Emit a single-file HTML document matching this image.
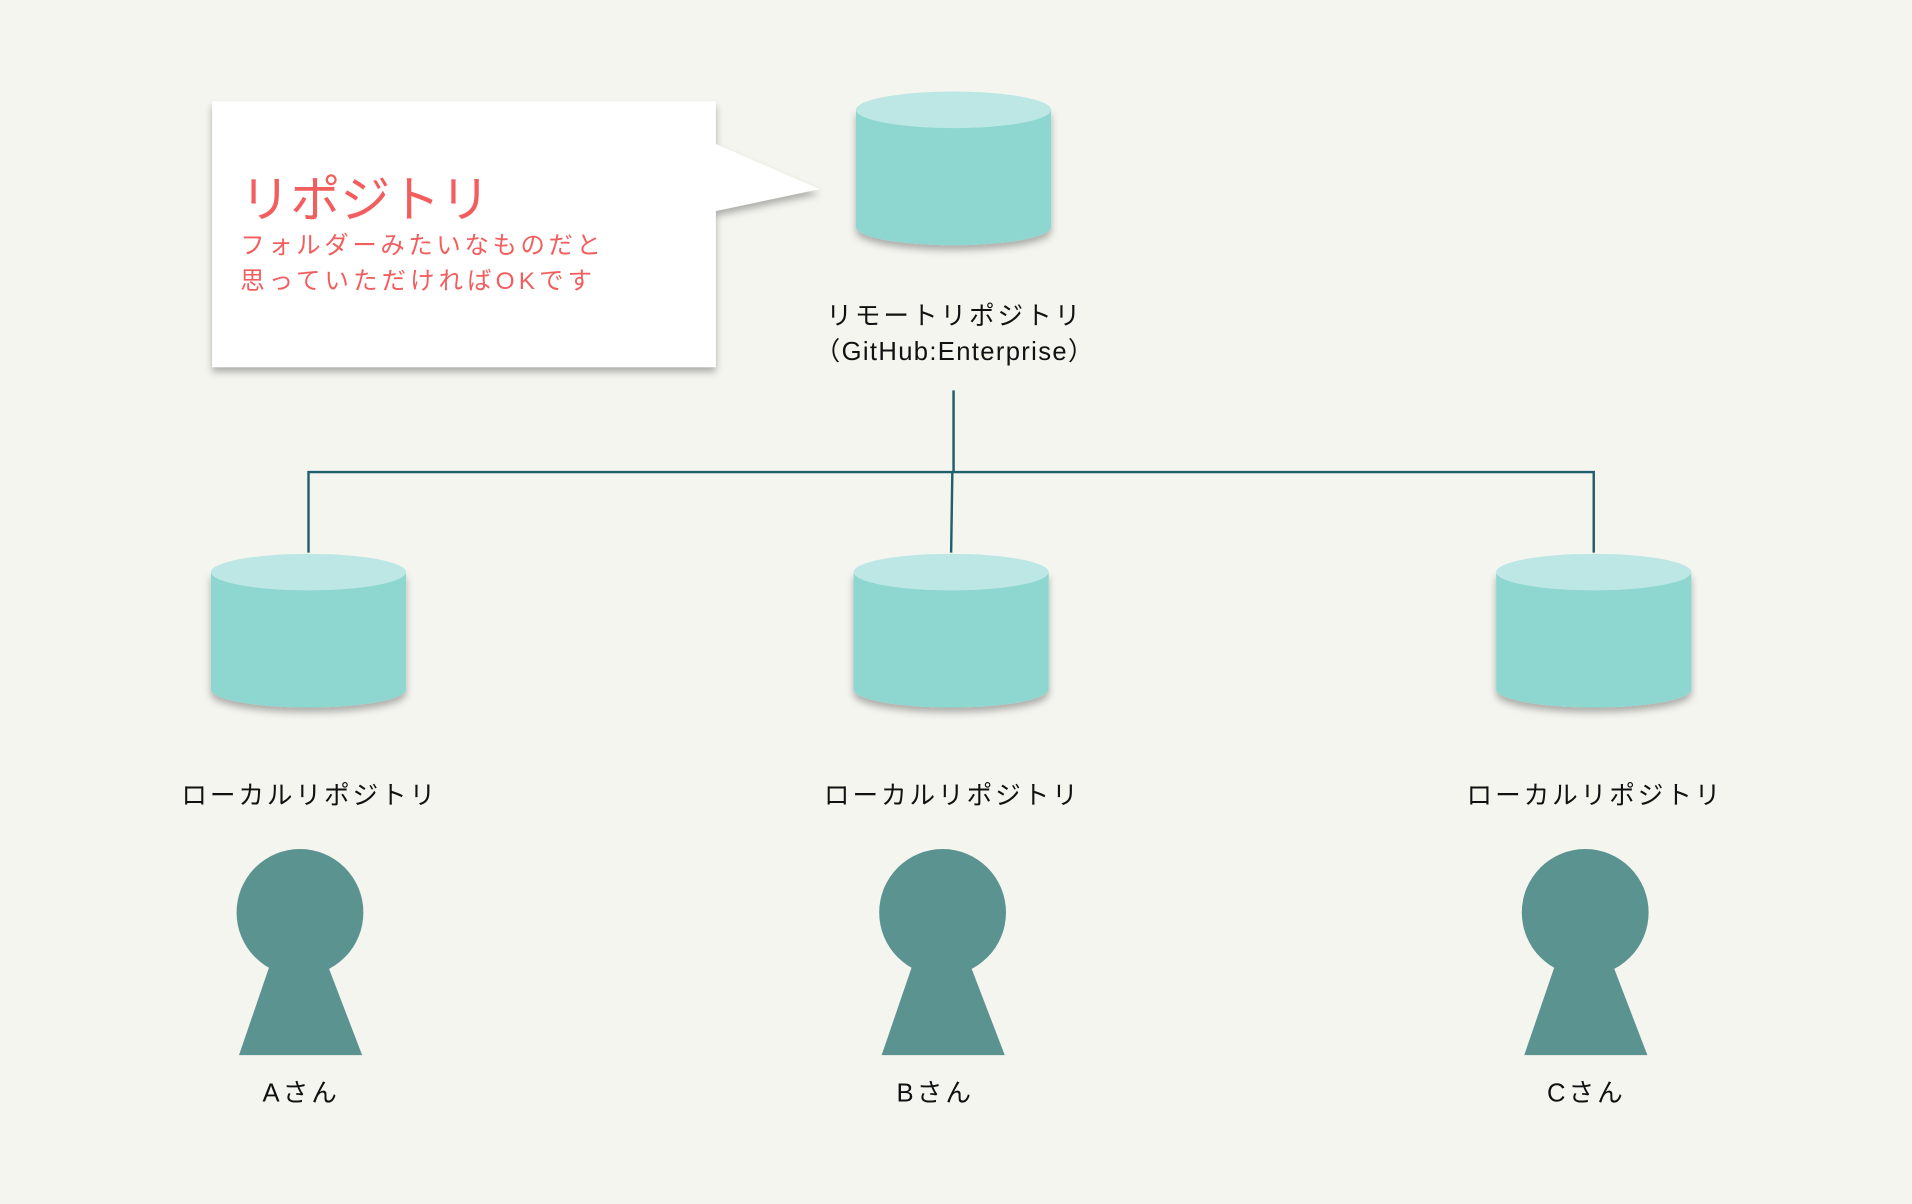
<!DOCTYPE html>
<html><head><meta charset="utf-8"><style>
html,body{margin:0;padding:0;background:#f5f5f0;}
svg{display:block;}
text{font-family:"Liberation Sans","Noto Sans CJK JP",sans-serif;}
</style></head><body>
<svg width="1912" height="1204" viewBox="0 0 1568 987" preserveAspectRatio="none" xmlns="http://www.w3.org/2000/svg">
<defs>
<filter id="sh" x="-20%" y="-20%" width="140%" height="150%">
<feDropShadow dx="0" dy="4" stdDeviation="3" flood-color="#000" flood-opacity="0.3"/>
</filter>
<g id="cyl">
<path d="M-80,-64 L-80,32 A80,15 0 0 0 80,32 L80,-64 Z" fill="#8dd7d0" filter="url(#sh)"/>
<ellipse cx="0" cy="-64" rx="80" ry="15" fill="#bce7e4"/>
</g>
<g id="person" fill="#5b9391">
<circle cx="0" cy="0" r="52"/>
<path d="M-25,44 L23,44 L51,117 L-50,117 Z"/>
</g>
</defs>
<rect width="1568" height="987" fill="#f5f5f0"/>
<path d="M174,83 L587,83 L587,118 L672,155 L587,173 L587,301 L174,301 Z" fill="#fff" filter="url(#sh)"/>
<text x="197" y="178" font-size="41" fill="#f25e5e">リポジトリ</text>
<text x="197" y="208" font-size="20" fill="#f25e5e" letter-spacing="3">フォルダーみたいなものだと</text>
<text x="197" y="237" font-size="20" fill="#f25e5e" letter-spacing="3.4">思っていただければOKです</text>
<use href="#cyl" x="782" y="154"/>
<text x="783" y="266" font-size="21" fill="#111" text-anchor="middle" letter-spacing="2.4">リモートリポジトリ</text>
<text x="783" y="295" font-size="21" fill="#111" text-anchor="middle" letter-spacing="1.1">（GitHub:Enterprise）</text>
<g stroke="#1f5f6e" stroke-width="2" fill="none">
<path d="M782,320 L782,387 M253,453 L253,387 L1307,387 L1307,453 M781,387 L780,453"/>
</g>
<use href="#cyl" x="253" y="533"/>
<use href="#cyl" x="780" y="533"/>
<use href="#cyl" x="1307" y="533"/>
<text x="254" y="659" font-size="21" fill="#111" text-anchor="middle" letter-spacing="2.4">ローカルリポジトリ</text>
<text x="781" y="659" font-size="21" fill="#111" text-anchor="middle" letter-spacing="2.4">ローカルリポジトリ</text>
<text x="1308" y="659" font-size="21" fill="#111" text-anchor="middle" letter-spacing="2.4">ローカルリポジトリ</text>
<use href="#person" x="246" y="748"/>
<use href="#person" x="773" y="748"/>
<use href="#person" x="1300" y="748"/>
<text x="247" y="903" font-size="21" fill="#111" text-anchor="middle" letter-spacing="2.5">Aさん</text>
<text x="767" y="903" font-size="21" fill="#111" text-anchor="middle" letter-spacing="2.5">Bさん</text>
<text x="1301" y="903" font-size="21" fill="#111" text-anchor="middle" letter-spacing="2.5">Cさん</text>
</svg>
</body></html>
